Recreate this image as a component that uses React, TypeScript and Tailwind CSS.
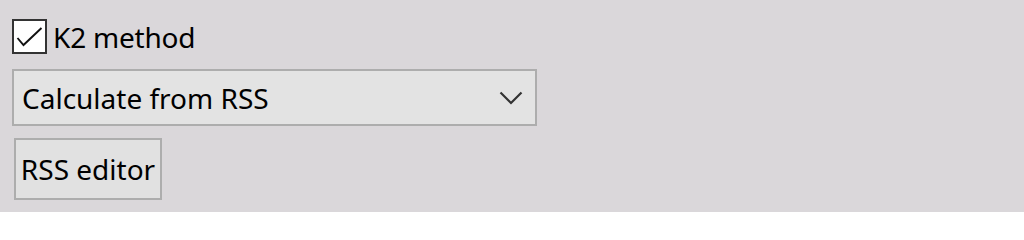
export default function App() {
  return (
    <div
      className="w-[1024px] h-[212px] overflow-hidden bg-[#dad7da] text-[#000000] flex flex-col pl-3 pt-[19px]"
      style={{ fontFamily: '"Noto Sans", "Open Sans", sans-serif' }}
    >
      <label className="flex items-center h-[35px] gap-[6px]">
        <span className="w-[35px] h-[35px] border-2 border-[#333333] bg-white flex items-center justify-center shrink-0">
          <svg width="27" height="27" viewBox="0 0 27 27">
            <path d="M1.5 15 L7.5 22 L25.5 5" fill="none" stroke="#111" strokeWidth="1.9" />
          </svg>
        </span>
        <span className="text-[28px] leading-none tracking-[-0.2px]">K2 method</span>
      </label>

      <div className="mt-[15px] w-[525px] h-[57px] border-2 border-[#adadad] bg-[#e3e3e3] flex items-center justify-between pl-[8px] pr-[12px]">
        <span className="text-[28px] leading-none">Calculate from RSS</span>
        <svg width="24" height="14" viewBox="0 0 24 14">
          <path d="M1.5 1.5 L12 12 L22.5 1.5" fill="none" stroke="#333" strokeWidth="2.2" />
        </svg>
      </div>

      <button className="mt-[12px] ml-[2px] w-[148px] h-[62px] border-2 border-[#adadad] bg-[#e1e1e1] flex items-center justify-center text-[28px] leading-none">
        RSS editor
      </button>
    </div>
  );
}
